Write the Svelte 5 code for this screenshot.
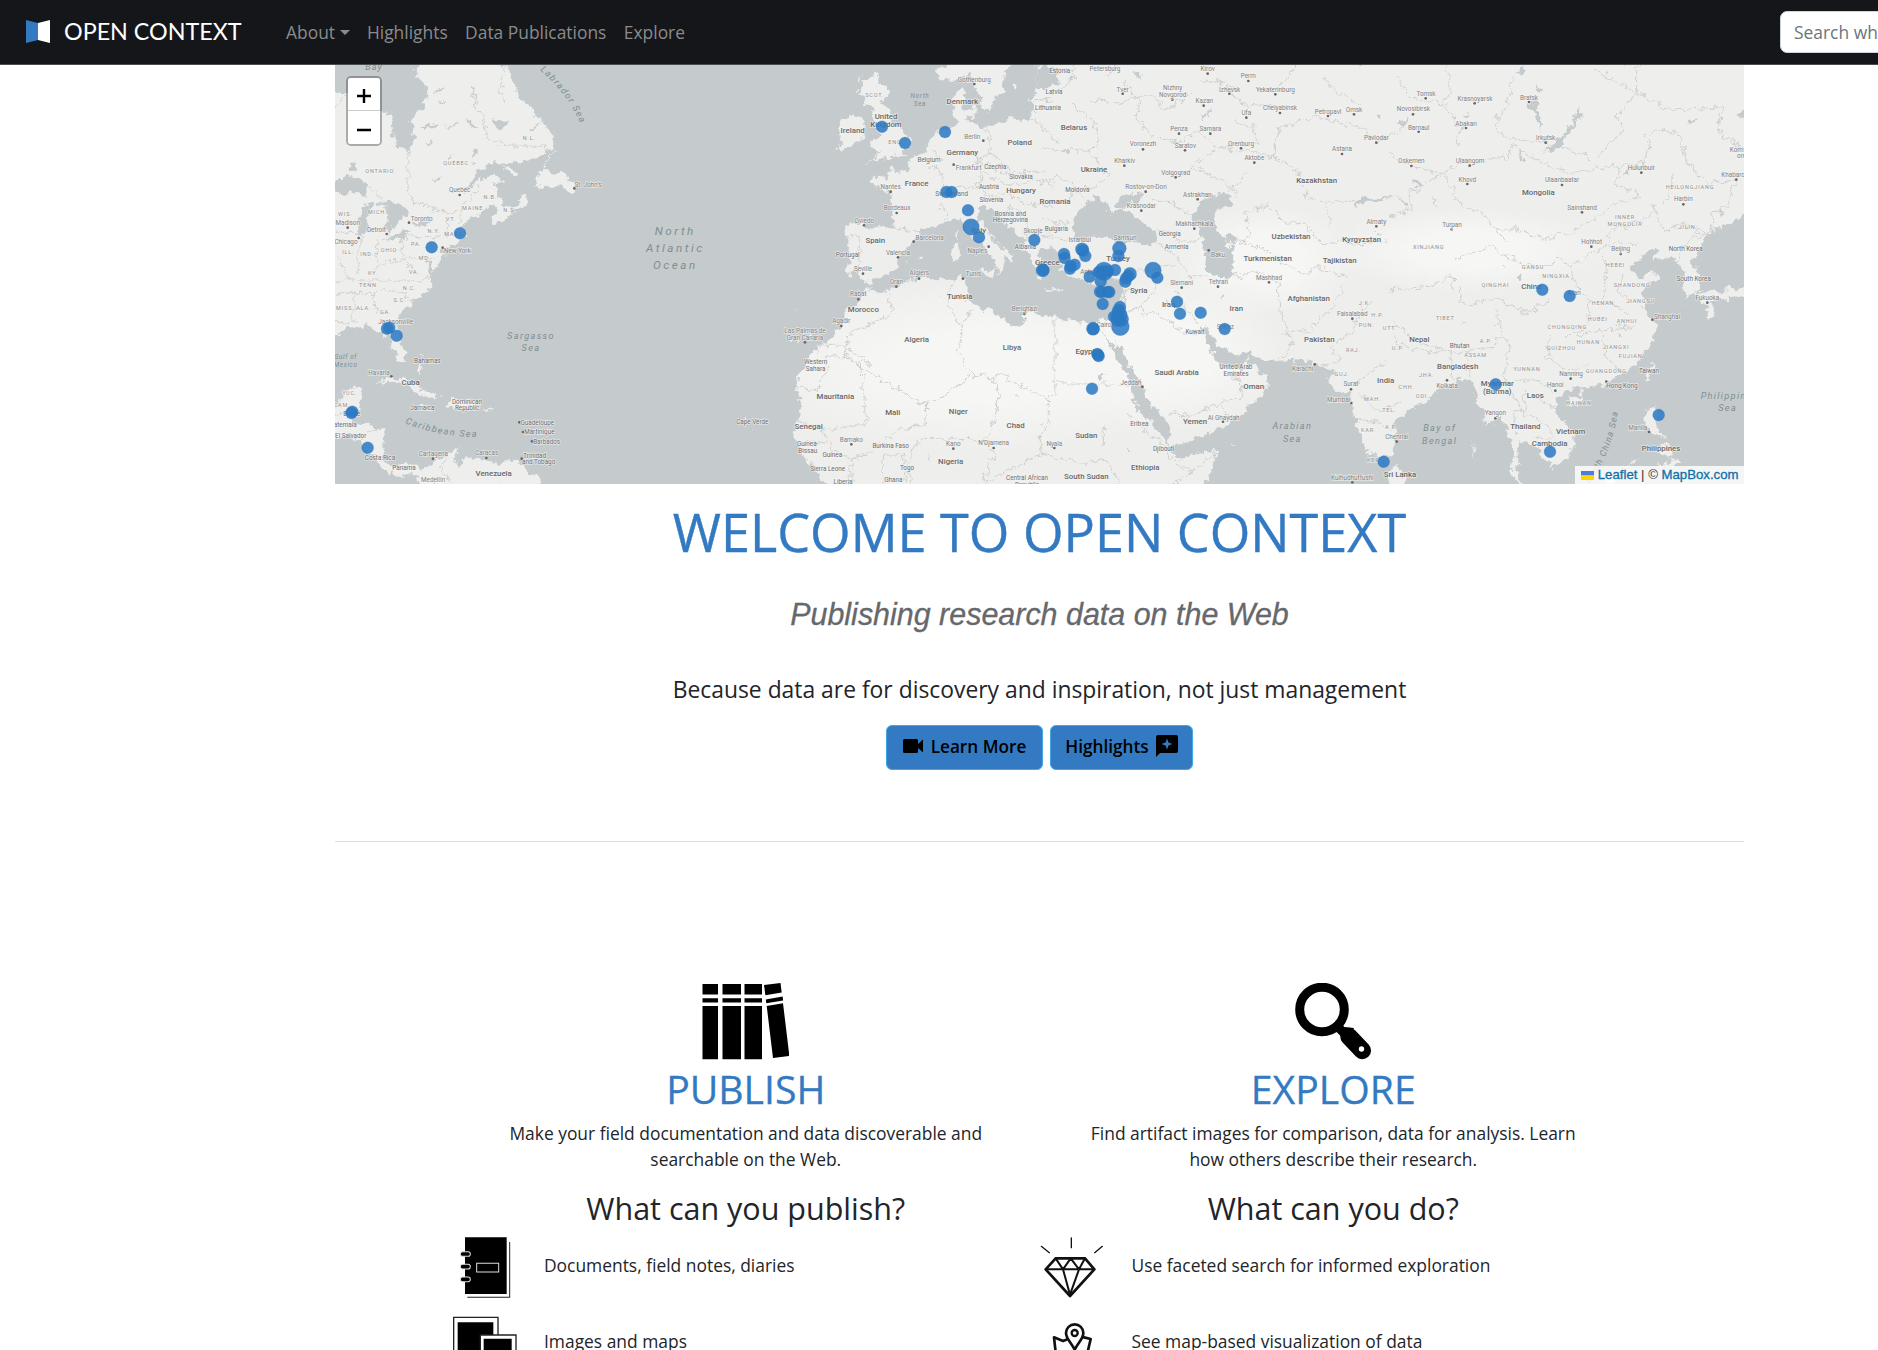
<script>
  // Each map sheet has its own origin; units are a third of a pixel.
  const sheets = [
    {
      dx: 0,
      land: [
        'M-10 90L40 95 145 155 172 160 175 235 205 265 222 280 240 245 238 205 225 175 262 150 280 120 280 90 262 60 245 35 262 5 500 5 525 30 535 60 550 80 555 115 575 130 600 150 605 170 630 180 645 205 662 230 660 262 640 272 600 295 560 310 460 310 435 335 410 370 390 402 430 365 470 342 500 345 505 360 480 375 490 400 495 420 510 438 540 440 560 415 580 402 585 425 540 455 510 480 482 490 475 470 490 445 460 440 455 455 430 465 400 480 385 500 393 530 375 545 328 570 320 600 300 635 285 600 278 602 282 630 290 650 292 675 280 700 245 720 215 745 195 770 187 800 195 830 212 870 208 905 190 895 175 865 168 840 160 825 130 815 100 798 75 803 40 798 30 818 -10 820Z',
        'M664 270L640 300 628 325 655 335 700 345 704 365 722 378 712 405 700 385 660 380 600 382 618 345 640 290Z',
        'M505 322L530 326 552 340 530 338Z',
        'M130 972L160 953 200 955 240 970 270 990 320 1010 285 1013 250 1000 220 972 180 965Z',
        'M335 1038L350 1015 400 1020 440 1042 400 1050 370 1045Z',
        'M235 1042L270 1040 292 1048 260 1052Z',
        'M452 1043L480 1046 475 1051 455 1050Z',
        'M-10 1050L18 1030 25 995 45 985 87 983 78 1020 70 1050 58 1090 100 1094 152 1108 148 1150 150 1200 175 1218 210 1210 250 1215 265 1235 290 1215 305 1190 340 1190 372 1160 378 1170 360 1200 372 1220 388 1205 390 1188 450 1202 500 1205 560 1202 570 1225 600 1245 630 1280 260 1280 250 1250 230 1240 190 1252 150 1225 120 1190 100 1182 75 1140 40 1130 -10 1130Z',
        'M245 910l12 5 4 22-8-6zM250 880l22 4-6 4z'
      ],
      water: [
        'M80 445L100 428 125 432 110 450 100 470 97 505 90 535 76 530 76 490Z',
        'M130 425L210 435 222 470 195 478 180 500 165 522 155 500 165 480 155 450Z',
        'M-10 378L40 350 70 355 100 385 95 405 60 395 20 402 -10 400Z',
        'M155 535L190 520 232 512 215 528 175 545Z',
        'M228 495L255 485 290 482 275 495 240 500Z',
        'M50 310l14 2 2 22-16-4zM260 205l60-20-10 14-46 14zM330 195l40-6-10 12zM395 170l20 20 18 20-20-2-14-20zM480 185l45-5-20 28-18-4zM580 210l50-20-30 20zM412 265l18 4-6 20-12-4zM330 300l20-22-6 20zM300 95l32-18-14 16zM312 125l30-6-20 12zM275 240l18 6-12 10zM412 305l16 2-4 14zM300 355l28 2-18 6z'
      ],
      borders: [
        'M222 280V395L240 430 290 440 320 452 378 452 440 375M290 460L320 452M340 455V530M378 452V495M418 80L420 130 450 180 460 230 515 258H640V270M515 15L500 90 515 130M0 140L40 100M0 370L60 360 120 395 150 425 175 500 160 525M0 660H290M0 700H120L165 690 240 720M60 700V790M120 700L130 770M10 590L40 660M75 540V640M130 540V610M205 530V590H300M205 530H320M110 640L150 605 205 600 240 640M0 520H76M0 785H50M0 1060H50M75 1140L100 1120 150 1105M345 1180L320 1230 350 1272'
      ]
    },
    {
      dx: 1068,
      land: [
        'M545 355L570 350 598 350 600 328 630 340 660 322 665 295 700 280 720 245 745 215 780 200 805 188 790 165 785 120 800 95 822 82 825 105 818 130 830 175 860 198 895 200 960 175 1015 182 1035 150 1022 120 1045 80 1060 90 1062 60 1040 40 1050 5 1120 5 1120 580 1075 600 1075 650 1045 650 1035 615 1015 585 1000 560 998 530 960 500 930 480 905 450 880 440 860 445 862 470 880 495 915 545 950 570 970 590 965 602 942 590 945 620 925 645 918 600 895 572 860 545 830 515 812 480 790 475 755 492 720 495 690 505 690 522 670 550 640 570 625 600 632 620 600 640 560 658 535 672 512 655 500 642 468 640 475 600 480 560 468 530 462 505 480 490 540 500 600 505 610 480 605 430 600 398 570 385 545 368Z',
        'M735 45L755 20 790 5 970 5 945 40 938 90 915 115 895 150 875 150 870 105 850 70 838 35 800 62 750 60Z',
        'M812 150L840 140 860 150 850 175 825 168Z',
        'M540 45L572 40 560 70 597 75 590 110 572 130 600 150 610 180 632 215 665 235 660 260 635 275 655 285 600 292 560 300 530 312 560 285 578 272 540 268 550 240 572 225 560 195 545 180 548 150 525 130 515 100 520 60Z',
        'M450 195L465 180 485 158 515 165 525 190 515 240 480 262 440 268 452 235Z',
        'M500 60l14-12-6 22zM498 85l8 2-4 12z',
        'M788 555L808 548 810 600 790 602Z', 'M795 520L805 512 803 545Z', 'M865 632L918 626 908 655 885 648Z',
        'M678 588l16-2-6 10zM650 600l8 0-3 8zM970 75l10-5-4 20z',
        'M530 680L545 690 600 693 640 668 700 655 790 655 830 648 835 680 828 718 870 742 910 755 950 788 985 802 1005 788 1000 760 1040 750 1120 768 1120 1290 425 1290 400 1260 370 1222 330 1170 312 1130 318 1090 335 1060 330 1010 315 985 330 950 360 890 390 855 430 830 460 795 460 760 510 720 520 690Z',
        'M295 838l10 2-4 8zM320 845l8-4 0 8zM360 826l12-4-8 12zM310 745l12 2-8 3zM160 1070l8 2-6 3zM190 1105l8 2-6 3zM100 612l8 1zM152 630l8 3zM1050 688l60 4-30 6z'
      ],
      water: ['M742 715l8-4 0 8zM1040 45l20 30 50-10-20-50-40 0zM975 1010l6-8 2 16zM712 1190l6-6 0 18z'],
      borders: [
        'M470 530H510L505 600 495 640M600 500L690 520M700 300L760 345 765 385 755 440 770 475M720 270L760 300M890 205L905 280 860 300 880 340 860 380 770 385M860 300L950 340 1070 335M905 280L960 330M880 340L950 375 1050 360 1090 380M860 380L900 410 950 400 1000 430 1090 440M930 470L960 440 1000 460 1010 520 1060 500M1000 530L1090 525M1020 180L1060 190M1030 125L1090 120M595 695L608 760 560 785 470 830V890L692 1030 740 1020 855 940 820 915 808 880 815 800 770 730 790 655M388 856H470M470 890H410V940L388 955V985H318M470 862L540 910H514L528 1098H460L410 1110M692 1030H710L708 1090 630 1110 530 1180 480 1195 430 1165 400 1110 320 1080M855 940L910 952 928 943 1080 1022M910 952L925 1000 918 1075 880 1140 700 1135 660 1180V1272M815 800L845 745M530 1190L480 1200 490 1272M580 1272V1185H640L650 1272M1080 1095L1045 1130 1055 1180 960 1230 880 1272M880 1140L915 1180 880 1260M345 1140L410 1150'
      ]
    },
    {
      dx: 2118,
      land: ['M-10 5H1110V1290H-10Z'],
      water: [
        'M-20 645L5 655 25 640 10 610 -5 590 0 565 40 562 55 580 58 610 70 640 90 650 125 655 150 672 180 668 215 655 240 655 248 665 245 710 235 760 215 778 180 778 140 790 90 780 45 770 -20 765Z',
        'M100 530L97 500 112 470 135 430 165 412 195 430 215 462 250 445 300 480 350 520 355 545 330 558 270 545 230 545 190 530 150 538 115 545Z',
        'M225 430L260 405 320 398 295 425 265 432 240 445Z',
        'M450 465L480 430 500 412 550 398 572 410 568 440 530 445 520 480 535 520 562 530 565 555 580 560 582 650 555 655 520 645 490 622 502 580 485 540 470 500Z',
        'M560 530l22-6 12 20-20 12z',
        'M180 808L205 850 230 890 255 930 275 975 280 1030 330 1085 370 1130 390 1165 387 1110 360 1060 335 1030 312 990 300 960 270 920 240 862 228 850 222 862Z',
        'M480 805L500 800 540 855 600 890 635 868 640 890 720 905 800 903 850 922 892 938 862 952 870 975 902 1000 930 990 935 1040 950 1090 975 1160 1000 1215 1025 1245 1045 1230 1066 1160 1070 1130 1110 1110 1110 1290 490 1290 520 1215 530 1170 470 1182 410 1195 380 1165 430 1150 480 1130 545 1100 600 1065 655 1015 690 965 660 935 635 915 620 895 600 925 540 920 525 890 500 850Z',
        'M-10 20l40 20 4 30-20 20-24-6zM275 25l28 20-10 12zM88 35l10 20-8 10zM945 435l20-25 60 5 50-5-60 15-50 0-12 20zM1002 520l24-4-10 10zM662 468l6-30 22-16-18 20zM482 160l40-12-30 20 0 16zM180 940l14 0-6 14-10 0zM268 1162l10-2-2 12zM1012 160l14 4-6 12zM540 708l10-2-4 8zM380 720l8-2-4 14z'
      ],
      islands: ['M15 686l55 4-2 5-50-3zM180 700l30-14-10 22zM572 1155l16 1-10 3zM60 625l8 4-4 10z'],
      borders: [
        'M0 260L60 272 150 270 205 350M0 130L100 60V15M100 130L160 180 180 240 150 270M205 350L150 390 100 380 80 440M0 370L60 350 130 415M0 480L90 490M0 530L80 540M330 415L400 430 450 465M350 500L420 540 480 540M355 550L410 590 440 640M240 655L270 640 350 625 400 610M350 625L345 690 305 735 250 765 250 700 270 680M305 735L310 765 350 760 440 820 475 825M45 770V1010H25V1095L0 1090M45 972H270M385 1062L460 1065 540 1030 605 1010V960L560 945M545 1030L560 1075M400 690L440 740 480 800M440 650L500 650M580 650L650 635 720 670 715 720 730 790 755 850 720 900M722 820L800 815 880 740 910 680M580 545L660 560 720 600 790 640 840 620 920 650M620 545V455L680 440 740 490 800 490 830 540 860 550 900 540 960 555 1040 540M455 320L560 370 600 410M455 320L530 260 700 290 720 200 840 170 900 190 960 200 1020 250 1090 200M620 545L560 530M720 200L700 290 770 330M770 330L800 410 870 430 940 425M870 860L930 820 960 760 1000 720M840 920L905 900 870 860M240 1272L200 1200 120 1210 0 1180M260 1060L300 1100 370 1150 385 1190 460 1235 400 1272M530 1170L460 1235M190 1100V1160M560 400L620 340M250 60L300 130 290 180 340 230M150 120L240 130 330 100 380 150 450 100M350 230L420 250 470 210 520 250M480 60L560 70 600 130 700 140M580 180L640 200 660 260M0 200L60 250M200 50L230 15M850 50L900 100 960 130M720 80L770 15M860 430L870 500M960 1000L1010 1050 1080 1030M950 1080L1020 1090M960 960L1040 900'
      ]
    },
    {
      dx: 3168,
      land: ['M0 5H1080V1290H0Z'],
      water: [
        'M-60 1290L-60 1180 10 1190 20 1145 8 1095 60 1050 100 1030 130 1010 145 985 190 968 205 950 220 968 240 960 258 1000 270 1035 282 1060 285 1090 315 1085 335 1070 350 1105 372 1180 360 1240 400 1290Z',
        'M410 1290L375 1230 385 1190 388 1140 410 1142 425 1165 445 1165 455 1190 480 1205 480 1228 530 1190 560 1150 545 1110 500 1062 495 1020 520 1000 560 980 580 990 600 985 650 965 700 940 750 900 790 840 797 800 770 740 752 712 768 672 805 652 790 640 740 652 715 612 750 600 790 560 802 572 790 598 830 592 860 600 878 640 885 710 930 690 932 650 905 600 940 550 945 522 1000 500 1080 455 1080 1290Z',
        'M565 138L572 165 540 220 500 265 460 272 480 255 530 215 550 180Z',
        'M372 40l20-14 20 10-18 6zM432 70l10 30 20-10M410 130l20-6 20 30 0 60-6-20-8-40-20-10zM388 270l10-4 0 30-8 6zM895 180l32-6-20 18zM380 648l16-4 6 14-14 2zM125 410l10 10 6 20zM1040 165l30-20 0 30zM980 455l14-4-4 14zM210 790l10-2-4 6zM190 650l8 2-6 4zM338 620l8-3-2 6zM215 165l26-12-18 20zM20 190l40 -20-22 24zM70 375l30 3-20-20zM75 340l18 12zM700 350l10-16 6 8zM685 825l12 4-8 8zM20 400l40 50-20-15z'
      ],
      islands: [
        'M15 1210L40 1245 38 1290 -5 1290 0 1240Z', 'M535 1022L560 1008 575 1012 560 1040 545 1040Z',
        'M770 945L790 905 795 915 775 968Z',
        'M770 1045L800 1040 795 1085 810 1120 840 1140 800 1125 778 1115 766 1085Z',
        'M790 1165L830 1150 850 1190 830 1195ZM800 1215L850 1195 870 1215 830 1215ZM700 1225L750 1185 735 1210Z',
        'M915 697L990 690 1080 680 1080 708 1000 712 962 722 977 765 955 775 945 735 930 715Z', 'M990 705l35 0-20 14z',
        'M876 732l10 0-6 4zM250 1140l5 30-5 30zM620 1272l60-20-10 20zM570 985l8 10-6 12z'
      ],
      borders: [
        'M0 470L60 450V400L160 340 210 310 350 290 365 255 440 300 540 340 690 315 680 375 755 405 680 430 610 480 540 520 460 535 380 510 318 510 275 460 215 440 160 340M0 280L70 320 160 340M690 315L760 310 780 250 765 225 800 210 860 220 900 320 960 370 1035 360 1010 440 965 460V510L880 550 860 600M0 780L60 830 180 880 300 860 340 830 360 870 340 950 370 1000 400 1060 440 1080 495 1120 480 1140 430 1130M180 890L190 960M230 890L240 950M370 960L440 960 500 1000M400 990L410 1050 370 1060 380 1130M440 1010L520 1070 560 1150M0 690L100 680 190 650 190 690M190 600L300 560 350 590 440 630 500 590 540 620 600 580 680 540 740 550M210 680L220 740 320 720 420 760 480 720M320 740L330 820M540 620L560 680 600 720 590 800 530 830M640 590L650 660 640 720 720 760M700 640L680 700 760 740M480 830L470 890 530 930 590 920M640 830L650 900 700 940M560 830L620 810 730 800M790 440L820 520 880 490 960 530M650 540L670 510 760 480 800 440M850 340L840 400 820 430M20 50L60 110 160 130 180 90 170 15M160 130L210 200 200 260M370 50L350 140 310 190 340 230 480 250 600 290M740 15V100L680 170 700 210 620 290M740 100L850 150 1000 140M610 25L740 100M1000 140L980 210 1062 270M0 830L40 860 160 880M320 510L350 550'
      ]
    }
  ];

  // [text, x, y, style]: c country, s small country, t town, p province, w water
  const labels = [
    [0, 'Bay', 120, 24, 'w m'], [0, 'N.L.', 586, 234, 'p'], [0, 'QUÉBEC', 366, 308, 'p'], [0, 'ONTARIO', 137, 331, 'p'],
    [0, 'St. John’s', 762, 373, 't'], [0, 'Quebec', 377, 389, 't'], [0, 'N.B.', 469, 410, 'p'], [0, 'MAINE', 416, 442, 'p'], [0, 'N.S.', 528, 448, 'p'],
    [0, 'WIS.', 34, 461, 'p'], [0, 'MICH.', 131, 455, 'p'], [0, 'Madison', 41, 489, 't'], [0, 'Toronto', 263, 477, 't'], [0, 'VT.', 351, 477, 'p'],
    [0, 'Detroit', 127, 510, 't'], [0, 'N.Y.', 300, 511, 'p'], [0, 'MASS.', 362, 522, 'p'], [0, 'Chicago', 36, 545, 't'], [0, 'PA.', 247, 552, 'p'],
    [0, 'ILL.', 43, 576, 'p'], [0, 'IND.', 99, 581, 'p'], [0, 'OHIO', 165, 569, 'p'], [0, 'New York', 370, 573, 't'], [0, 'MD.', 272, 592, 'p'],
    [0, 'KY.', 117, 638, 'p'], [0, 'VA.', 241, 635, 'p'], [0, 'TENN.', 105, 673, 'p'], [0, 'N.C.', 227, 684, 'p'], [0, 'S.C.', 198, 720, 'p'],
    [0, 'MISS.', 34, 744, 'p'], [0, 'ALA.', 89, 744, 'p'], [0, 'GA.', 155, 756, 'p'], [0, 'Jacksonville', 185, 784, 't'],
    [0, 'Gulf of', 35, 889, 'w n'], [0, 'Mexico', 35, 915, 'w n'], [0, 'Bahamas', 280, 902, 's'], [0, 'Havana', 135, 937, 't'], [0, 'Cuba', 230, 967, 'c'],
    [0, 'YUC.', 47, 997, 'p'], [0, 'CAM.', 24, 1035, 'p'], [0, 'Belize', 53, 1062, 's'], [0, 'Guatemala', 22, 1093, 's'], [0, 'El Salvador', 50, 1128, 's'],
    [0, 'Jamaica', 265, 1044, 's'], [0, 'Dominican', 399, 1025, 's'], [0, 'Republic', 399, 1044, 's'], [0, 'Guadeloupe', 610, 1087, 's'],
    [0, 'Martinique', 616, 1116, 's'], [0, 'Barbados', 638, 1144, 's'], [0, 'Trinidad', 602, 1186, 's'], [0, 'and Tobago', 614, 1206, 's'],
    [0, 'Cartagena', 298, 1181, 't'], [0, 'Caracas', 458, 1179, 't'], [0, 'Costa Rica', 138, 1194, 's'], [0, 'Panama', 210, 1224, 's'],
    [0, 'Medellín', 297, 1259, 't'], [0, 'Venezuela', 479, 1242, 'c'],
    [0, 'North', 1024, 518, 'w x'], [0, 'Atlantic', 1024, 569, 'w x'], [0, 'Ocean', 1024, 619, 'w x'], [0, 'Sargasso', 591, 829, 'w l'], [0, 'Sea', 591, 867, 'w l'],
    [1, 'SCOT.', 554, 105, 'p'], [1, 'North', 690, 106, 'w n'], [1, 'Sea', 690, 132, 'w n'], [1, 'Gothenburg', 853, 59, 't'], [1, 'Denmark', 817, 126, 'c'],
    [1, 'United', 588, 169, 'c'], [1, 'Kingdom', 588, 195, 'c'], [1, 'Ireland', 488, 211, 'c'], [1, 'ENG.', 618, 245, 'p'], [1, 'Berlin', 847, 229, 't'],
    [1, 'Poland', 989, 247, 'c'], [1, 'Germany', 817, 277, 'c'], [1, 'Belgium', 717, 299, 's'], [1, 'Frankfurt', 836, 324, 't'], [1, 'Czechia', 916, 319, 's'],
    [1, 'Slovakia', 993, 349, 's'], [1, 'Nantes', 602, 380, 't'], [1, 'France', 680, 371, 'c'], [1, 'Switzerland', 785, 401, 's'], [1, 'Austria', 897, 379, 's'],
    [1, 'Hungary', 993, 393, 'c'], [1, 'Slovenia', 904, 418, 's'], [1, 'Bordeaux', 621, 443, 't'], [1, 'Bosnia and', 961, 461, 's'], [1, 'Herzegovina', 961, 480, 's'],
    [1, 'Oviedo', 523, 482, 't'], [1, 'Spain', 556, 541, 'c'], [1, 'Barcelona', 719, 534, 't'], [1, 'Italy', 866, 512, 'c'], [1, 'Skopje', 1029, 513, 't'],
    [1, 'Portugal', 473, 584, 's'], [1, 'Valencia', 624, 577, 't'], [1, 'Naples', 862, 571, 't'], [1, 'Albania', 1006, 560, 's'], [1, 'Seville', 519, 627, 't'],
    [1, 'Algiers', 688, 639, 't'], [1, 'Tunis', 850, 642, 't'], [1, 'Oran', 619, 665, 't'], [1, 'Rabat', 505, 702, 't'], [1, 'Tunisia', 809, 711, 'c'],
    [1, 'Morocco', 520, 750, 'c'], [1, 'Benghazi', 1004, 745, 't'], [1, 'Agadir', 454, 783, 't'], [1, 'Las Palmas de', 345, 812, 't'], [1, 'Gran Canaria', 345, 832, 't'],
    [1, 'Algeria', 680, 839, 'c'], [1, 'Libya', 966, 863, 'c'], [1, 'Western', 377, 904, 's'], [1, 'Sahara', 377, 925, 's'], [1, 'Mauritania', 436, 1011, 'c'],
    [1, 'Mali', 608, 1058, 'c'], [1, 'Niger', 805, 1056, 'c'], [1, 'Chad', 977, 1096, 'c'], [1, 'Cape Verde', 187, 1086, 's'], [1, 'Senegal', 356, 1099, 'c'],
    [1, 'Guinea-', 353, 1152, 's'], [1, 'Bissau', 353, 1171, 's'], [1, 'Bamako', 484, 1138, 't'], [1, 'Burkina Faso', 602, 1157, 's'], [1, 'Kano', 790, 1151, 't'],
    [1, 'N’Djamena', 911, 1148, 't'], [1, 'Guinea', 427, 1185, 's'], [1, 'Nigeria', 782, 1206, 'c'], [1, 'Sierra Leone', 413, 1227, 's'], [1, 'Togo', 651, 1223, 's'],
    [1, 'Ghana', 610, 1258, 's'], [1, 'Liberia', 459, 1266, 's'], [1, 'Central African', 1011, 1253, 's'], [1, 'Republic', 1011, 1275, 's'],
    [2, 'Estonia', 59, 31, 's'], [2, 'Petersburg', 195, 26, 't'], [2, 'Kirov', 503, 27, 't'], [2, 'Perm', 625, 47, 't'], [2, 'Latvia', 42, 94, 's'], [2, 'Tver', 248, 88, 't'],
    [2, 'Nizhny', 398, 84, 't'], [2, 'Novgorod', 398, 104, 't'], [2, 'Izhevsk', 569, 88, 't'], [2, 'Yekaterinburg', 706, 88, 't'], [2, 'Kazan', 493, 122, 't'],
    [2, 'Lithuania', 24, 143, 's'], [2, 'Ufa', 619, 157, 't'], [2, 'Chelyabinsk', 720, 143, 't'], [2, 'Petropavl', 864, 154, 't'], [2, 'Omsk', 942, 149, 't'],
    [2, 'Belarus', 102, 204, 'c'], [2, 'Penza', 417, 206, 't'], [2, 'Samara', 511, 206, 't'], [2, 'Voronezh', 309, 252, 't'], [2, 'Saratov', 436, 257, 't'],
    [2, 'Orenburg', 603, 250, 't'], [2, 'Pavlodar', 1009, 234, 't'], [2, 'Astana', 906, 267, 't'], [2, 'Kharkiv', 254, 301, 't'], [2, 'Aktobe', 643, 294, 't'],
    [2, 'Ukraine', 162, 330, 'c'], [2, 'Volgograd', 407, 338, 't'], [2, 'Kazakhstan', 830, 362, 'c'], [2, 'Moldova', 112, 390, 's'], [2, 'Rostov-on-Don', 318, 379, 't'],
    [2, 'Romania', 45, 426, 'c'], [2, 'Krasnodar', 304, 437, 't'], [2, 'Astrakhan', 472, 403, 't'], [2, 'Bulgaria', 49, 507, 's'], [2, 'Makhachkala', 463, 492, 't'],
    [2, 'Almaty', 1009, 484, 't'], [2, 'Istanbul', 119, 539, 't'], [2, 'Samsun', 255, 532, 't'], [2, 'Georgia', 389, 521, 's'], [2, 'Uzbekistan', 753, 531, 'c'],
    [2, 'Kyrgyzstan', 965, 538, 'c'], [2, 'Armenia', 410, 561, 's'], [2, 'Baku', 534, 584, 't'], [2, 'Turkey', 234, 597, 'c'], [2, 'Turkmenistan', 683, 595, 'c'],
    [2, 'Tajikistan', 899, 602, 'c'], [2, 'Greece', 22, 608, 'c'], [2, 'Antalya', 152, 636, 't'], [2, 'Slemani', 425, 668, 't'], [2, 'Tehran', 535, 665, 't'],
    [2, 'Mashhad', 687, 652, 't'], [2, 'Syria', 296, 691, 'c'], [2, 'Iraq', 386, 734, 'c'], [2, 'Iran', 589, 745, 'c'], [2, 'Afghanistan', 806, 717, 'c'],
    [2, 'J.K.', 975, 729, 'p'], [2, 'Faisalabad', 937, 761, 't'], [2, 'H.P.', 1013, 765, 'p'], [2, 'Cairo', 192, 794, 't'], [2, 'PUN.', 980, 795, 'p'],
    [2, 'UTT.', 1050, 802, 'p'], [2, 'Shiraz', 556, 800, 't'], [2, 'Kuwait', 465, 816, 's'], [2, 'Pakistan', 838, 839, 'c'], [2, 'RAJ.', 940, 870, 'p'],
    [2, 'Egypt', 136, 875, 'c'], [2, 'Saudi Arabia', 410, 938, 'c'], [2, 'United Arab', 588, 921, 's'], [2, 'Emirates', 588, 940, 's'], [2, 'Karachi', 788, 926, 't'],
    [2, 'GUJ.', 906, 940, 'p'], [2, 'Jeddah', 273, 968, 't'], [2, 'Oman', 641, 979, 'c'], [2, 'Surat', 933, 972, 't'], [2, 'India', 1037, 962, 'c'],
    [2, 'Mumbai', 896, 1018, 't'], [2, 'MAH.', 998, 1016, 'p'], [2, 'TEL.', 1048, 1048, 'p'], [2, 'Al Ghaydah', 551, 1072, 't'], [2, 'Yemen', 465, 1085, 'c'],
    [2, 'Eritrea', 298, 1092, 's'], [2, 'KAR.', 986, 1109, 'p'], [2, 'A.P.', 1054, 1099, 'p'], [2, 'Sudan', 139, 1126, 'c'], [2, 'Nyala', 43, 1151, 't'],
    [2, 'Djibouti', 371, 1166, 's'], [2, 'Ethiopia', 316, 1224, 'c'], [2, 'KER.', 1003, 1200, 'p'], [2, 'South Sudan', 139, 1249, 'c'], [2, 'Kulhudhuffushi', 937, 1252, 't'],
    [2, 'Arabian', 757, 1100, 'w l'], [2, 'Sea', 757, 1138, 'w l'],
    [3, 'Tomsk', 108, 100, 't'], [3, 'Krasnoyarsk', 255, 115, 't'], [3, 'Bratsk', 417, 112, 't'], [3, 'Novosibirsk', 70, 147, 't'], [3, 'Abakan', 228, 190, 't'],
    [3, 'Barnaul', 86, 202, 't'], [3, 'Irkutsk', 467, 234, 't'], [3, 'Oskemen', 64, 303, 't'], [3, 'Ulaangom', 240, 302, 't'], [3, 'Khovd', 232, 359, 't'],
    [3, 'Ulaanbaatar', 516, 359, 't'], [3, 'Hulunbuir', 754, 323, 't'], [3, 'Koms', 1044, 268, 't'], [3, 'on', 1052, 287, 't'], [3, 'Khabarov', 1034, 345, 't'],
    [3, 'HEILONGJIANG', 900, 380, 'p'], [3, 'Mongolia', 445, 399, 'c'], [3, 'Harbin', 880, 417, 't'], [3, 'Sainshand', 576, 442, 't'], [3, 'INNER', 705, 471, 'p'],
    [3, 'MONGOLIA', 705, 491, 'p'], [3, 'Turpan', 186, 493, 't'], [3, 'JILIN', 891, 499, 'p'], [3, 'XINJIANG', 116, 561, 'p'], [3, 'Hohhot', 605, 544, 't'],
    [3, 'Beijing', 692, 566, 't'], [3, 'North Korea', 887, 566, 's'], [3, 'GANSU', 429, 621, 'p'], [3, 'HEBEI', 676, 615, 'p'], [3, 'NINGXIA', 498, 648, 'p'],
    [3, 'QINGHAI', 316, 673, 'p'], [3, 'China', 424, 679, 'c'], [3, 'SHANDONG', 726, 673, 'p'], [3, 'South Korea', 911, 656, 's'], [3, 'Xi’an', 552, 698, 't'],
    [3, 'HENAN', 639, 729, 'p'], [3, 'JIANGSU', 752, 723, 'p'], [3, 'Fukuoka', 952, 714, 't'], [3, 'TIBET', 166, 772, 'p'], [3, 'HUBEI', 623, 777, 'p'],
    [3, 'ANHUI', 711, 783, 'p'], [3, 'Shanghai', 831, 769, 't'], [3, 'CHONGQING', 532, 801, 'p'], [3, 'Nepal', 88, 838, 'c'], [3, 'Bhutan', 209, 857, 's'],
    [3, 'A.P.', 288, 841, 'p'], [3, 'GUIZHOU', 514, 864, 'p'], [3, 'HUNAN', 595, 845, 'p'], [3, 'JIANGXI', 678, 859, 'p'], [3, 'U.P.', 24, 863, 'p'],
    [3, 'ASSAM', 257, 883, 'p'], [3, 'FUJIAN', 722, 888, 'p'], [3, 'Bangladesh', 203, 919, 'c'], [3, 'YUNNAN', 411, 925, 'p'], [3, 'Nanning', 543, 940, 't'],
    [3, 'GUANGDONG', 649, 931, 'p'], [3, 'Taiwan', 777, 931, 's'], [3, 'JHA.', 110, 944, 'p'], [3, 'Kolkata', 171, 976, 't'], [3, 'Myanmar', 322, 970, 'c'],
    [3, '(Burma)', 322, 996, 'c'], [3, 'Hanoi', 496, 975, 't'], [3, 'Hong Kong', 696, 977, 's'], [3, 'CHH.', 50, 981, 'p'], [3, 'ODI.', 98, 1007, 'p'],
    [3, 'Laos', 436, 1007, 'c'], [3, 'HAINAN', 567, 1028, 'p'], [3, 'Yangon', 316, 1059, 't'], [3, 'Thailand', 406, 1101, 'c'], [3, 'Vietnam', 542, 1116, 'c'],
    [3, 'Manila', 743, 1104, 't'], [3, 'Chennai', 20, 1130, 't'], [3, 'Cambodia', 479, 1152, 'c'], [3, 'Philippines', 813, 1165, 'c'], [3, 'Sri Lanka', 30, 1243, 'c'],
    [3, 'Bay of', 149, 1107, 'w l'], [3, 'Bengal', 149, 1145, 'w l'], [3, 'Philippine', 1010, 1009, 'w l'], [3, 'Sea', 1013, 1047, 'w l']
  ];

  const towns = [
    [0, 721, 385], [0, 377, 405], [0, 41, 503], [0, 225, 488], [0, 158, 522], [0, 74, 534], [0, 326, 563], [0, 172, 949], [0, 556, 1087], [0, 567, 1116], [0, 594, 1144], [0, 563, 1196], [0, 297, 1196], [0, 457, 1194],
    [1, 853, 72], [1, 880, 242], [1, 791, 314], [1, 602, 395], [1, 620, 459], [1, 522, 496], [1, 671, 545], [1, 624, 592], [1, 896, 560], [1, 519, 641], [1, 687, 656], [1, 819, 656], [1, 619, 680], [1, 505, 718], [1, 1003, 761], [1, 454, 798], [1, 345, 847], [1, 484, 1153], [1, 790, 1166], [1, 911, 1164],
    [2, 503, 41], [2, 625, 63], [2, 248, 101], [2, 397, 119], [2, 568, 101], [2, 706, 103], [2, 491, 137], [2, 619, 173], [2, 720, 159], [2, 864, 168], [2, 942, 163], [2, 417, 221], [2, 511, 221], [2, 309, 268], [2, 435, 271], [2, 603, 265], [2, 1009, 248], [2, 906, 282], [2, 253, 317], [2, 643, 308], [2, 407, 352], [2, 317, 395], [2, 304, 452], [2, 473, 418], [2, 463, 506], [2, 1009, 499], [2, 506, 571], [2, 425, 683], [2, 534, 680], [2, 687, 667], [2, 937, 776], [2, 824, 913], [2, 307, 980], [2, 933, 988], [2, 934, 1029], [2, 549, 1085], [2, 43, 1164], [2, 937, 1267],
    [3, 107, 115], [3, 254, 130], [3, 417, 126], [3, 69, 163], [3, 228, 204], [3, 86, 215], [3, 467, 248], [3, 64, 318], [3, 239, 317], [3, 232, 372], [3, 516, 375], [3, 754, 338], [3, 1039, 359], [3, 880, 433], [3, 576, 457], [3, 185, 508], [3, 604, 560], [3, 692, 582], [3, 952, 728], [3, 787, 779], [3, 171, 961], [3, 542, 956], [3, 649, 965], [3, 496, 992], [3, 316, 1075], [3, 777, 1116], [3, 20, 1145]
  ];

  const sites = [
    [0, 378, 520], [0, 293, 562], [0, 159, 806], [0, 166, 803], [0, 188, 827], [0, 52, 1059], [0, 55, 1055], [0, 101, 1163],
    [1, 576, 200], [1, 645, 249], [1, 765, 216], [1, 769, 396], [1, 785, 396], [1, 834, 451], [1, 843, 501, 25], [1, 867, 532], [1, 1033, 540], [1, 1058, 631, 20], [1, 1060, 630],
    [2, 72, 582], [2, 74, 594], [2, 126, 568, 20], [2, 129, 572], [2, 136, 588], [2, 104, 614], [2, 90, 626], [2, 92, 618],
    [2, 238, 565, 21], [2, 235, 588], [2, 149, 650], [2, 176, 637], [2, 192, 634, 28], [2, 190, 636, 20], [2, 204, 634], [2, 225, 630], [2, 182, 664],
    [2, 270, 642, 20], [2, 265, 648], [2, 256, 665], [2, 258, 655], [2, 339, 631, 25], [2, 352, 653], [2, 180, 695], [2, 186, 696], [2, 203, 696], [2, 208, 696], [2, 188, 732],
    [2, 240, 741], [2, 236, 752, 20], [2, 222, 770], [2, 238, 765, 24], [2, 244, 778, 22], [2, 232, 780, 20], [2, 241, 800, 27], [2, 159, 806, 20], [2, 160, 807],
    [2, 172, 882], [2, 176, 888], [2, 174, 885], [2, 156, 986], [2, 411, 725], [2, 420, 761], [2, 482, 758], [2, 554, 807], [2, 1031, 1205],
    [3, 457, 689], [3, 539, 708], [3, 317, 973], [3, 806, 1065], [3, 480, 1175]
  ];
</script>

<div class="page">
  <nav class="navbar">
    <a class="brand" href="#home" aria-label="Open Context">
      <svg class="mark" viewBox="0 0 24 23"><path d="M0 0l12 3v17L0 23z" fill="#337ac2" /><path d="M12 3l12-3v23l-12-3z" fill="#fff" /></svg>
      <span class="wordmark">OPEN CONTEXT</span>
    </a>
    <div class="links">
      <a href="#about">About<i class="caret"></i></a>
      <a href="#highlights">Highlights</a>
      <a href="#publications">Data Publications</a>
      <a href="#explore">Explore</a>
    </div>
    <div class="search">Search whole site</div>
  </nav>

  <main>
    <section class="map">
      <svg class="canvas" viewBox="3 15 4227 1257">
        <defs>
          <filter id="coast" x="0" y="0" width="100%" height="100%" filterUnits="objectBoundingBox">
            <feTurbulence type="fractalNoise" baseFrequency="0.045" numOctaves="4" seed="7" />
            <feDisplacementMap in="SourceGraphic" scale="34" xChannelSelector="R" yChannelSelector="G" />
          </filter>
          <radialGradient id="desert"><stop offset=".4" stop-color="#f6f6f4" /><stop offset="1" stop-color="#f6f6f4" stop-opacity="0" /></radialGradient>
          <path id="labrador" d="M618 30Q710 110 745 205" />
          <path id="caribbean" d="M213 1090Q330 1135 445 1130" />
          <path id="southchina" d="M598 1272Q670 1170 685 1045" />
          <clipPath id="africa"><path transform="translate(1068 0)" d={sheets[1].land[10]} /><path transform="translate(2118 0)" d="M-10 500H1100V1290H-10Z" /></clipPath>
        </defs>
        <g filter="url(#coast)">
          <rect x="-60" y="-40" width="4360" height="1380" fill="#c5cbcd" />
          {#each sheets as s}
            <g transform={`translate(${s.dx} 0)`} class="land">{#each s.land as d}<path {d} />{/each}</g>
          {/each}
          <g clip-path="url(#africa)">
            <ellipse cx="1950" cy="920" rx="720" ry="260" fill="url(#desert)" />
            <ellipse cx="2500" cy="880" rx="350" ry="230" fill="url(#desert)" />
          </g>
          <ellipse cx="3400" cy="570" rx="420" ry="130" fill="url(#desert)" />
          <ellipse cx="2790" cy="600" rx="280" ry="170" fill="url(#desert)" />
          {#each sheets as s}
            <g transform={`translate(${s.dx} 0)`}>
              {#each s.borders as d}<path class="border" {d} />{/each}
              {#each s.water as d}<path class="water" {d} />{/each}
              {#each s.islands ?? [] as d}<path class="isle" {d} />{/each}
            </g>
          {/each}
        </g>
        {#each towns as [n, x, y]}<circle class="town" cx={sheets[n].dx + x} cy={y} r="4" />{/each}
        {#each labels as [n, text, x, y, kind]}<text class={kind} x={sheets[n].dx + x} y={y + 7}>{text}</text>{/each}
        <text class="w l curve"><textPath href="#labrador">Labrador Sea</textPath></text>
        <text class="w l curve"><textPath href="#caribbean">Caribbean Sea</textPath></text>
        <g transform="translate(3168 0)"><text class="w m curve"><textPath href="#southchina">South China Sea</textPath></text></g>
        {#each sites as [n, x, y, r = 18]}<circle class="site" cx={sheets[n].dx + x} cy={y} {r} />{/each}
      </svg>
      <div class="zoom"><button aria-label="Zoom in"><svg viewBox="0 0 14 14"><path d="M7 0v14M0 7h14" /></svg></button><button aria-label="Zoom out"><svg viewBox="0 0 14 14"><path d="M0 7h14" /></svg></button></div>
      <div class="credit"><svg viewBox="0 0 13 9"><path fill="#4c7be1" d="M0 0h13v4.5H0z" /><path fill="#ffd500" d="M0 4.5h13V9H0z" /></svg><span><a href="#leaflet">Leaflet</a> | © <a href="#mapbox">MapBox.com</a></span></div>
    </section>

    <section class="hero">
      <h1>WELCOME TO OPEN CONTEXT</h1>
      <p class="tagline">Publishing research data on the Web</p>
      <p class="because">Because data are for discovery and inspiration, not just management</p>
      <div class="actions">
        <a class="btn learn" href="#learn"><svg class="video" viewBox="0 0 20 14"><path d="M1.5 0h12Q15 0 15 1.500V5l5-4.500v13L15 9v3.500Q15 14 13.500 14h-12Q0 14 0 12.500v-11Q0 0 1.500 0z" /></svg>Learn More</a>
        <a class="btn high" href="#highlights">Highlights<svg class="star" viewBox="0 0 22 22"><path fill-rule="evenodd" d="M2 0h18q2 0 2 2v14q0 2-2 2H4l-4 4V2Q0 0 2 0zM11 3.500L9.500 7.500 5.500 9l4 1.500L11 14.500l1.500-4 4-1.500-4-1.500z" /></svg></a>
      </div>
    </section>

    <section class="columns">
      <article>
        <svg class="emblem" viewBox="702 983 87 77">
          <path d="M702.500 984H718v10.500h-15.500zM722.500 984H741v10.500h-18.500zM744.500 984H762v10.500h-17.500zM702.500 998.300H718v4.200h-15.500zM722.500 998.300H741v4.200h-18.500zM744.500 998.300H762v4.200h-17.500zM702.500 1006H718v53.300h-15.500zM722.500 1006H741v53.300h-18.500zM744.500 1006H762v53.300h-17.500z" />
          <path d="M764 985l16.500-2 1.200 9.500-16.300 2.800zM765.800 999.500l16.800-3 .5 4-16.800 2.700zM766.700 1006l16.300-2.800 6.400 52.800-16.400 2z" />
        </svg>
        <h2>PUBLISH</h2>
        <p class="lead">Make your field documentation and data discoverable and searchable on the Web.</p>
        <h3>What can you publish?</h3>
        <div class="item">
          <svg viewBox="36 45 200 200">
            <path d="M75 52H200V222H75z" /><path d="M209 66V232H82" fill="none" stroke="#222" stroke-width="3" />
            <path d="M110 130h66v26h-66z" fill="none" stroke="#ddd" stroke-width="3" />
            {#each [102, 140, 178] as y}<rect x="61" y={y - 7} width="30" height="14" rx="7" stroke="#ddd" stroke-width="3" />{/each}
          </svg><span>Documents, field notes, diaries</span>
        </div>
        <div class="item">
          <svg viewBox="36 273 200 200">
            <path d="M41 292H174V430H41z" fill="#fff" stroke="#222" stroke-width="4" /><path d="M53 307H160V420H53z" />
            <path d="M121 345H228V470H121z" fill="#fff" stroke="#222" stroke-width="4" /><path d="M131 356H215V460H131z" />
          </svg><span>Images and maps</span>
        </div>
      </article>
      <article>
        <svg class="emblem lens" viewBox="1294 983 79 77">
          <circle cx="1322" cy="1009.500" r="22.300" fill="none" stroke="#000" stroke-width="9" />
          <path d="M1337 1026l8 8" stroke="#000" stroke-width="9" /><path d="M1349 1036.500l13.300 14" stroke="#000" stroke-width="17.500" stroke-linecap="round" />
          <path d="M1340 1031l5 13 9-16-9-1z" /><circle cx="1361.500" cy="1049" r="2.700" fill="#fff" />
        </svg>
        <h2>EXPLORE</h2>
        <p class="lead">Find artifact images for comparison, data for analysis. Learn how others describe their research.</p>
        <h3>What can you do?</h3>
        <div class="item">
          <svg viewBox="30 45 200 200" class="line">
            <path d="M77 115H165L193 148 120 228 47 148z" stroke-width="8" /><path d="M47 148H193M77 115l22 33 23-33 25 33 18-33M99 148l21 76 27-76" stroke-width="6" />
            <path d="M124 54v29M34 79l24 19M217 79l-23 19" stroke-width="4" />
          </svg><span>Use faceted search for informed exploration</span>
        </div>
        <div class="item">
          <svg viewBox="30 273 200 200" class="line">
            <path d="M134 389c-12-23-26-33-26-50a26 26 0 0 1 52 0c0 17-14 27-26 50z" stroke-width="8" /><circle cx="134" cy="339" r="9" stroke-width="7" />
            <path d="M109 359l-10 4-27-11 10 90 40-20 40 20 20-85-20-5" stroke-width="8" />
          </svg><span>See map-based visualization of data</span>
        </div>
      </article>
    </section>
  </main>
</div>

<style>
  :global(body) { margin: 0; background: #fff; overflow: hidden; }
  .page { width: 1878px; height: 1350px; overflow: hidden; font-family: 'Open Sans', 'Noto Sans', sans-serif; color: #212529; font-size: 17.420px; }
  a { color: inherit; text-decoration: none; }
  .navbar { height: 64px; background: #141619; border-bottom: 1px solid #4a4d50; display: flex; align-items: center; overflow: hidden; }
  .brand { display: flex; align-items: center; gap: 14px; margin-left: 26px; width: 260px; flex: none; color: #fff; }
  .mark { width: 24px; height: 23px; }
  .wordmark { font: 400 23.300px/1 Lato, sans-serif; white-space: nowrap; }
  .links { display: flex; gap: 17.400px; color: #8a8b8d; white-space: nowrap; flex: 1; }
  .caret { display: inline-block; margin-left: 4.500px; vertical-align: 4.500px; border-top: 5px solid; border-left: 5px solid transparent; border-right: 5px solid transparent; }
  .search { flex: none; box-sizing: border-box; width: 240px; height: 42px; margin-right: -142px; margin-bottom: 1px; padding-left: 13px; border: 1px solid #ced4da; border-radius: 7px; background: #fff; color: #6c757d; line-height: 40px; }
  main { width: 1409px; margin-left: 335px; }
  .map { position: relative; height: 419px; }
  .canvas { display: block; width: 1409px; height: 419px; overflow: hidden; }
  .land path { fill: #eeeeed; }
  .isle { fill: #eeeeed; }
  .water { fill: #c5cbcd; }
  .border { fill: none; stroke: #cbcbca; stroke-width: 2.800; }
  .canvas text { font-family: Roboto, sans-serif; text-anchor: middle; paint-order: stroke; stroke: #f4f4f3; stroke-width: 4; stroke-opacity: .7; }
  .canvas .c { font-size: 23.500px; font-weight: 500; fill: #686868; }
  .canvas .s { font-size: 19px; fill: #6e6e6e; }
  .canvas .t { font-size: 19px; fill: #828282; }
  .canvas .p { font-size: 16.500px; letter-spacing: 2.500px; fill: #929292; }
  .canvas .w { fill: #7f8e92; font-style: italic; stroke: none; letter-spacing: 3px; }
  .canvas .x { font-size: 35px; letter-spacing: 7.500px; }
  .canvas .l { font-size: 27.500px; letter-spacing: 4px; }
  .canvas .m { font-size: 27px; letter-spacing: 3px; }
  .canvas .n { font-size: 19px; letter-spacing: 2px; }
  .canvas .curve { text-anchor: start; }
  .town { fill: #666; }
  .site { fill: #2b79c2; fill-opacity: .86; stroke: #2f72bd; stroke-width: 1; stroke-opacity: .5; }
  .zoom { position: absolute; left: 11px; top: 11px; width: 32px; border: 2px solid rgba(0, 0, 0, .28); border-radius: 5px; background: #fff; background-clip: padding-box; overflow: hidden; box-sizing: content-box; }
  .zoom button { display: grid; place-items: center; width: 32px; height: 33px; padding: 4px 0 0; border: 0; background: #fff; }
  .zoom button:first-child { border-bottom: 1px solid #ccc; }
  .zoom svg { width: 14px; height: 14px; stroke: #000; stroke-width: 2.400; }
  .credit { position: absolute; right: 0; bottom: 0; display: flex; align-items: center; gap: 4px; height: 18px; padding: 0 5.500px; background: rgba(255, 255, 255, .8); font: 13.200px/18px 'Liberation Sans', sans-serif; color: #333; white-space: nowrap; }
  .credit svg { width: 13px; height: 9px; }
  .credit a { color: #0f70a8; -webkit-text-stroke: .3px; }
  .hero { text-align: center; height: 357px; border-bottom: 1px solid #dedfe0; }
  h1, h2, h3, p { margin: 0; font-weight: 400; }
  h1 { font-size: 52.200px; line-height: 64px; padding-top: 16px; color: #337ac2; white-space: nowrap; -webkit-text-stroke: .4px; }
  .tagline { font: italic 30.450px/40px 'Liberation Sans', sans-serif; color: #66686b; padding-top: 30px; -webkit-text-stroke: .3px; }
  .because { font-size: 22.860px; line-height: 36px; padding-top: 38px; }
  .actions { display: flex; justify-content: center; gap: 7px; padding-top: 17px; }
  .btn { display: flex; align-items: center; justify-content: center; box-sizing: border-box; height: 45px; padding-bottom: 3px; border: 1px solid #41a8e8; border-radius: 6px; background: #337ac2; color: #000; font-weight: 600; font-size: 17.200px; white-space: nowrap; }
  .learn { width: 157px; gap: 8px; }
  .high { width: 143px; gap: 7px; }
  .video { width: 20px; height: 14px; }
  .star { width: 22px; height: 22px; }
  .columns { display: grid; grid-template-columns: 587.500px 587.500px; justify-content: center; padding-top: 141px; }
  article { text-align: center; }
  .emblem { display: block; width: 87px; height: 77px; margin: 0 auto; }
  .lens { width: 79px; }
  h2 { font-size: 39.200px; line-height: 48px; padding-top: 5px; color: #337ac2; -webkit-text-stroke: .3px; }
  .lead { width: 496px; margin: 0 auto; padding-top: 7px; line-height: 26.400px; }
  h3 { font-size: 30.500px; line-height: 38px; padding-top: 16px; margin-bottom: 8px; }
  .item { display: flex; align-items: flex-start; gap: 25.300px; height: 76px; text-align: left; }
  .item svg { width: 66.700px; height: 66.700px; flex: none; }
  .item span { line-height: 26px; padding-top: 17px; }
  .line path, .line circle { fill: none; stroke: #111; stroke-linejoin: round; stroke-linecap: round; }
</style>
